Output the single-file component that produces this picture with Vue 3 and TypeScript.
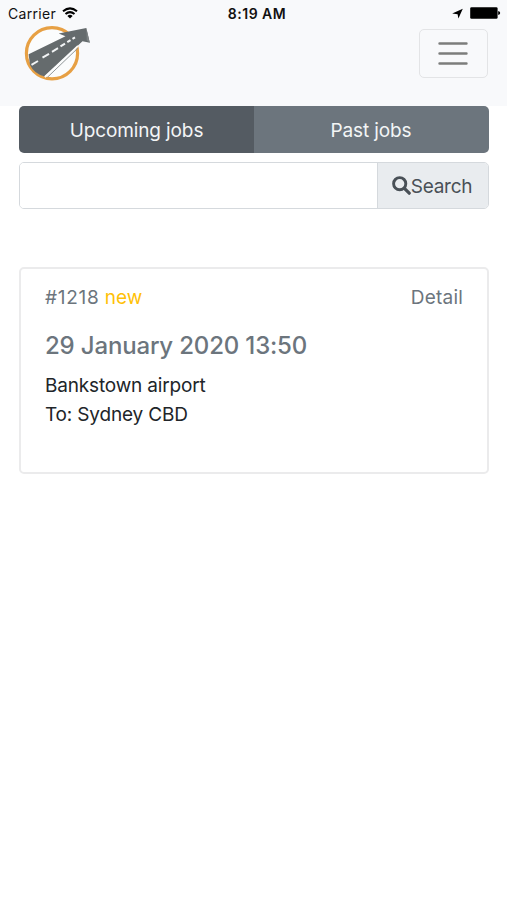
<script setup lang="ts">
import { ref } from 'vue'

interface Job {
  id: number
  status: string
  date: string
  from: string
  to: string
}

const tabs: string[] = ['Upcoming jobs', 'Past jobs']
const active = ref<number>(0)
const query = ref<string>('')
const jobs: Job[] = [
  { id: 1218, status: 'new', date: '29 January 2020 13:50', from: 'Bankstown airport', to: 'Sydney CBD' },
]
</script>

<template>
  <div class="screen">
    <header class="top">
      <div class="status">
        <div class="carrier">
          <span>Carrier</span>
          <svg class="wifi" viewBox="0 0 16 12" width="16" height="12" fill="none" stroke="#000" stroke-width="2">
            <path d="M1 4.3Q8-1.6 15 4.3M3.5 7Q8 3.2 12.5 7" />
            <path d="M5.4 8.9Q8 6.8 10.6 8.9L8 11.6Z" fill="#000" stroke="none" />
          </svg>
        </div>
        <div class="clock">8:19 AM</div>
        <div class="indicators">
          <svg viewBox="0 0 11 11" width="11" height="11"><path d="M10.8.8 6.4 10.6 5.6 6.3.2 5.6Z" /></svg>
          <svg viewBox="0 0 31 12" width="31" height="12">
            <rect x=".2" y=".2" width="27.4" height="11.6" rx="1.3" />
            <path d="M28.2 4q2 .3 2 2t-2 2z" />
          </svg>
        </div>
      </div>
      <nav class="navbar">
        <svg class="logo" viewBox="0 0 68 58" width="68" height="58">
          <circle cx="28" cy="29.3" r="25.6" fill="#fbfcfd" stroke="#e7a044" stroke-width="3.2" />
          <path d="M4.6 30.2 41.5 12.2 34.7 9.6 62.3 4 65.8 18.8 58.5 17.2 20.5 52.6Q10 49.5 6 41Z" fill="#656b6d" />
          <path d="M62.3 4 65.8 18.8 62.8 16.5Z" fill="#7d8284" />
          <path d="M7.5 40.8 14 37M18.5 33.6 25 29.8M28 27.8 34 24.2M36.5 22.4 41 19.6M43.3 18.2 46.5 16.2M48.5 14.8 51 13.3" fill="none" stroke="#f2f4f5" stroke-width="2" />
          <path d="M20.8 53 54 21.8" fill="none" stroke="#fbfcfd" stroke-width="1.8" />
          <path d="M23.4 53.3 54 24" fill="none" stroke="#92989a" stroke-width="1" />
        </svg>
        <button class="toggler" type="button" aria-label="Menu">
          <svg viewBox="0 0 30 24" width="30" height="24" stroke="#7c7d7c" stroke-width="2.4" stroke-linecap="round">
            <path d="M1.5 1.5H28.5M1.5 11.5H28.5M1.5 21.5H28.5" />
          </svg>
        </button>
      </nav>
    </header>

    <main class="content">
      <div class="tabs">
        <button
          v-for="(tab, i) in tabs"
          :key="tab"
          type="button"
          class="tab"
          :class="{ active: active === i }"
          @click="active = i"
        >{{ tab }}</button>
      </div>
      <div class="search">
        <input v-model="query" type="text" aria-label="Search jobs" />
        <button type="button">
          <svg viewBox="0 0 19 19" width="19" height="19" fill="none" stroke="#495057">
            <circle cx="7.7" cy="7.7" r="6.1" stroke-width="2.9" />
            <path d="M12.4 12.4 17.2 17.2" stroke-width="3.2" stroke-linecap="round" />
          </svg>
          <span>Search</span>
        </button>
      </div>
      <article v-for="job in jobs" :key="job.id" class="card">
        <div class="card-head">
          <div><span class="number">#{{ job.id }}</span> <span class="new">{{ job.status }}</span></div>
          <a class="detail">Detail</a>
        </div>
        <h2>{{ job.date }}</h2>
        <p>{{ job.from }}</p>
        <p>To: {{ job.to }}</p>
      </article>
    </main>
  </div>
</template>

<style>
body {
  margin: 0;
  background: #fff;
}
</style>

<style scoped>
.screen {
  min-height: 900px;
  font-family: Inter, "Liberation Sans", sans-serif;
  font-size: 19px;
  color: #212529;
}
.screen * {
  box-sizing: border-box;
}
svg {
  display: block;
  flex: none;
}
.top {
  height: 106px;
  background: #f8f9fb;
}
.status {
  display: grid;
  grid-template-columns: 1fr auto 1fr;
  align-items: center;
  height: 26px;
  padding: 0 6px 0 8px;
  font-size: 14px;
  color: #111;
}
.carrier {
  display: flex;
  align-items: center;
  gap: 6px;
  letter-spacing: 0.3px;
}
.clock {
  padding-left: 5px;
  font-weight: 600;
  letter-spacing: 0.5px;
}
.indicators {
  display: flex;
  align-items: center;
  justify-content: flex-end;
  gap: 7px;
}
.navbar {
  display: flex;
  justify-content: space-between;
  padding: 0 19px 0 24px;
}
.logo {
  margin-top: -2px;
}
.toggler {
  display: flex;
  align-items: center;
  justify-content: center;
  width: 69px;
  height: 49px;
  margin-top: 3px;
  padding: 0 1px 0 0;
  background: transparent;
  border: 1px solid #e3e4e6;
  border-radius: 5px;
}
.content {
  padding: 0 18px 0 19px;
}
.tabs {
  display: flex;
  height: 47px;
  overflow: hidden;
  border-radius: 5px;
}
.tab {
  flex: 1;
  padding: 1px 1px 0 0;
  font: inherit;
  letter-spacing: -0.12px;
  color: #f3f5f6;
  background: #6c757d;
  border: 0;
}
.tab.active {
  flex-basis: 1px;
  padding-right: 0;
  background: #545b62;
}
.search {
  display: flex;
  height: 47px;
  margin-top: 9px;
  overflow: hidden;
  border: 1px solid #d5d9dd;
  border-radius: 5px;
}
.search input {
  flex: 1;
  min-width: 0;
  padding: 0 15px;
  font: inherit;
  border: 0;
  outline: 0;
}
.search button {
  display: flex;
  align-items: center;
  justify-content: center;
  width: 111px;
  padding: 1px 2px 0 0;
  font: inherit;
  letter-spacing: -0.25px;
  color: #495057;
  background: #e9ecef;
  border: 0;
  border-left: 1px solid #d5d9dd;
}
.search svg {
  margin-top: -1px;
}
.card {
  height: 207px;
  margin-top: 58px;
  padding: 14px 24px;
  border: 2px solid #ebebec;
  border-radius: 5px;
}
.card-head {
  display: flex;
  justify-content: space-between;
  line-height: 29px;
  color: #6c757d;
}
.number {
  letter-spacing: 0.7px;
}
.new {
  color: #ffc107;
}
.detail {
  letter-spacing: 0.2px;
}
h2 {
  margin: 19px 0 10px;
  font-size: 24px;
  font-weight: 500;
  letter-spacing: -0.17px;
  line-height: 30px;
  color: #6c757d;
}
p {
  margin: 0;
  letter-spacing: -0.17px;
  line-height: 29px;
}
</style>
